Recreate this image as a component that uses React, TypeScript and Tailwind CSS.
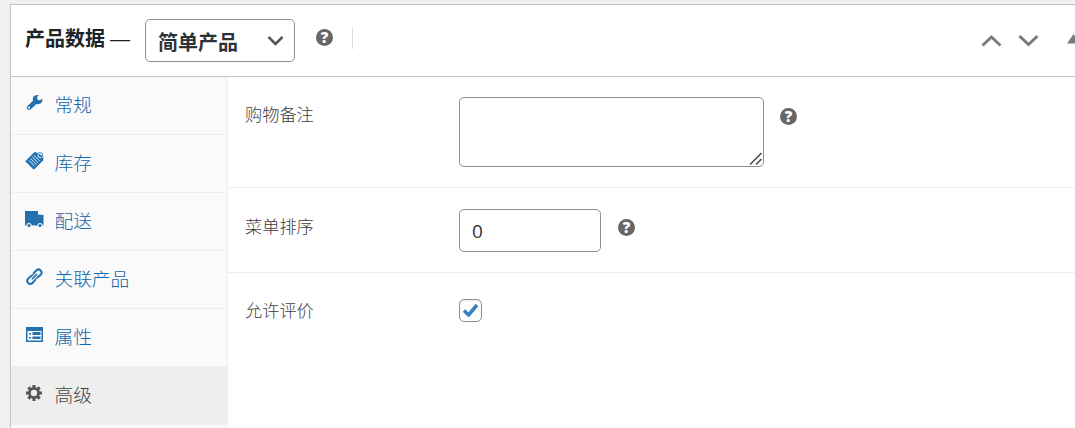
import type { ReactNode } from 'react'
import clsx from 'clsx'

type Tab = {
  label: string
  icon: ReactNode
  active?: boolean
}

const tabs: Tab[] = [
  { label: '常规', icon: <WrenchIcon /> },
  { label: '库存', icon: <NoteIcon /> },
  { label: '配送', icon: <TruckIcon /> },
  { label: '关联产品', icon: <LinkIcon /> },
  { label: '属性', icon: <ListIcon /> },
  { label: '高级', icon: <GearIcon />, active: true },
]

function WrenchIcon() {
  return (
    <svg width="20" height="20" viewBox="0 0 20 20" fill="none">
      <path
        d="M14.800 2.100 13 4.500l.6 2.300 2.300.6 2.300-1.900c.6 2.300-.3 4.500-2.300 5.300-1.100.5-2.400.5-3.500.1l-5.600 5.400c-1 .9-2.500.9-3.400 0-.9-.9-.9-2.400.1-3.400l5.500-5.200c-.4-1.200-.3-2.500.2-3.500.9-1.800 3-2.800 5.600-2.100Z"
        fill="currentColor"
      />
      <circle cx="5" cy="14.700" r="1.100" fill="#fafafa" />
    </svg>
  )
}

function NoteIcon() {
  return (
    <svg width="20" height="20" viewBox="0 0 20 20" fill="none">
      <path d="M10.800.8 1.200 10.300l8.600 8.500L19.300 9.300V5.200Z" fill="currentColor" />
      <path
        d="m10 4.300 5.700 5.700M8.300 6l5.700 5.700M6.600 7.700l5.700 5.700M4.900 9.400l5.700 5.700M3.200 11.100"
        stroke="#fafafa"
        strokeWidth=".9"
      />
      <path d="m13.300 1 5.700 1-.3 4.500M14 3.400l.5 2.800 2.900.5" stroke="#fafafa" strokeWidth=".9" />
      <path d="m14.300 1.400 4 .8.300 3.200" stroke="currentColor" strokeWidth=".8" />
    </svg>
  )
}

function TruckIcon() {
  return (
    <svg width="20" height="20" viewBox="0 0 20 20" fill="none">
      <path d="M1 2h13v3.500l5.500.5v10.500H1Z" fill="currentColor" />
      <circle cx="5" cy="16.500" r="2.600" fill="#fafafa" />
      <circle cx="16" cy="16.500" r="2.600" fill="#fafafa" />
      <circle cx="5" cy="16.500" r="1.600" fill="currentColor" />
      <circle cx="16" cy="16.500" r="1.600" fill="currentColor" />
    </svg>
  )
}

function LinkIcon() {
  return (
    <svg width="20" height="20" viewBox="0 0 20 20" fill="none" stroke="currentColor" strokeWidth="2">
      <rect x="-4.300" y="-3" width="8.600" height="6" rx="3" transform="translate(13.600 6.500) rotate(-45)" />
      <rect x="-4.300" y="-3" width="8.600" height="6" rx="3" transform="translate(7.200 12.900) rotate(-45)" />
      <path d="m8.200 11.900 4.400-4.400" stroke="#fafafa" strokeWidth="3.600" />
      <path d="m7.800 12.300 5.200-5.200" strokeWidth="1.600" />
    </svg>
  )
}

function ListIcon() {
  return (
    <svg width="20" height="20" viewBox="0 0 20 20" fill="none">
      <path d="M2 2h17v15H2Z" fill="currentColor" />
      <path d="M3.500 6h14v9.500h-14Z" fill="#fafafa" />
      <path d="M5 8h2v1.500H5ZM5 12h2v1.500H5ZM8.500 7h8v3h-8ZM8.500 11.500h8V14h-8Z" fill="currentColor" />
    </svg>
  )
}

function GearIcon() {
  return (
    <svg width="20" height="20" viewBox="0 0 20 20" fill="none" stroke="currentColor">
      <circle cx="10" cy="10" r="4.600" strokeWidth="2.800" />
      <path
        d="M10 2v3M10 15v3M2 10h3M15 10h3M4.340 4.340l2.120 2.120M13.540 13.540l2.120 2.120M4.340 15.660l2.120-2.120M13.540 6.460l2.120-2.120"
        strokeWidth="3"
      />
    </svg>
  )
}

function HelpTip({ className }: { className?: string }) {
  return (
    <span
      className={clsx(
        'flex size-[17px] shrink-0 items-center justify-center rounded-full bg-[#666] font-["Open_Sans",sans-serif] text-[15px] leading-[17px] font-extrabold text-white',
        className,
      )}
    >
      ?
    </span>
  )
}

function Field({ label, className, children }: { label: string; className: string; children: ReactNode }) {
  return (
    <div className={clsx('flex items-start pl-[17px]', className)}>
      <label className="w-[214px] shrink-0 text-[17.200px] leading-6 font-light text-[#3c3c3c]">{label}</label>
      {children}
    </div>
  )
}

export default function App() {
  return (
    <div className='h-[428px] overflow-hidden bg-[#f0f0f0] pt-1 pl-2.5 font-["Noto_Sans","Noto_Sans_CJK_SC",sans-serif]'>
      <div className="h-[424px] border-t border-l border-[#c3c4c7] bg-white">
        {/* Panel header */}
        <header className="flex h-[72px] items-start border-b border-[#c3c4c7] pl-3.5 text-[#1d2327]">
          <h2 className="mt-5 flex w-[120px] shrink-0 items-center text-[20px] leading-7 font-bold whitespace-nowrap">
            产品数据
            <span className="ml-[5px] font-['Liberation_Sans',sans-serif] font-normal">—</span>
          </h2>
          <div className="mt-3.5 flex h-[43px] w-[150px] shrink-0 items-center justify-between rounded-[5px] border border-[#8c8f94] pr-2.5 pl-3 text-[20px] leading-7 font-bold text-[#2c3338]">
            <span className="pt-1">简单产品</span>
            <svg width="17" height="11" viewBox="0 0 17 11" fill="none" stroke="#555" strokeWidth="2.500">
              <path d="m1.500 2 7 7 7-7" />
            </svg>
          </div>
          <HelpTip className="mt-[23.500px] ml-[21px]" />
          <div className="mt-[22px] ml-[19px] h-[22px] w-px bg-[#dcdcde]" />
          <div className="mt-[29px] ml-auto flex w-[94px] shrink-0 items-start overflow-hidden text-[#787c82]">
            <svg className="shrink-0" width="22" height="14" viewBox="0 0 22 14" fill="none" stroke="currentColor" strokeWidth="3">
              <path d="m1.500 11.500 9-8.500 9 8.500" />
            </svg>
            <svg className="ml-[15px] shrink-0" width="22" height="14" viewBox="0 0 22 14" fill="none" stroke="currentColor" strokeWidth="3">
              <path d="m1.500 2 9 8.500 9-8.500" />
            </svg>
            <svg className="ml-[27px] shrink-0" width="14" height="14" viewBox="0 0 14 14">
              <path d="M0 9.500 6.500 0l6.500 9.500Z" fill="currentColor" />
            </svg>
          </div>
        </header>

        <div className="flex h-[351px]">
          {/* Tabs */}
          <nav className="w-[217px] shrink-0 overflow-hidden border-r border-[#eee] bg-[#fafafa]">
            {tabs.map((tab) => (
              <a
                key={tab.label}
                className={clsx(
                  'flex h-[58px] items-start border-b border-[#eee] pl-[13px]',
                  tab.active ? 'bg-[#eee] text-[#555]' : 'text-[#2271b1]',
                )}
              >
                <span className="mt-4 w-[30.500px]">{tab.icon}</span>
                <span
                  className={clsx(
                    'mt-3.5 text-[18.700px] leading-7 font-light',
                    tab.active ? 'text-[#444]' : 'text-[#1266ab]',
                  )}
                >
                  {tab.label}
                </span>
              </a>
            ))}
          </nav>

          {/* Advanced options */}
          <section className="flex-1">
            <Field label="购物备注" className="h-[111px] border-b border-[#eee] pt-[26px]">
              <div className="relative -mt-1.5">
                <textarea className="block h-[70px] w-[305px] resize-none rounded-[5px] border border-[#8c8f94] outline-none" />
                <svg
                  className="absolute right-[2px] bottom-[2px]"
                  width="13"
                  height="13"
                  viewBox="0 0 13 13"
                  fill="none"
                  stroke="#555"
                  strokeWidth="1.600"
                >
                  <path d="M1 12.500 12.500 1M7 12.500l5.500-5.500" />
                </svg>
              </div>
              <HelpTip className="mt-[4.500px] ml-4" />
            </Field>
            <Field label="菜单排序" className="h-[85px] border-b border-[#eee] pt-[27px]">
              <input
                defaultValue="0"
                className="-mt-1.5 h-[43px] w-[142px] rounded-[5px] border border-[#8c8f94] px-3 font-['Open_Sans',sans-serif] text-[19px] text-[#2c3338] outline-none"
              />
              <HelpTip className="mt-1 ml-[17px]" />
            </Field>
            <Field label="允许评价" className="pt-[26px]">
              <span className="flex size-[23px] items-center justify-center rounded-[5px] border border-[#8c8f94] shadow-[inset_0_1px_2px_rgba(0,0,0,0.1)]">
                <svg width="17" height="17" viewBox="0 0 17 17" fill="none" stroke="#3582c4" strokeWidth="3.500">
                  <path d="m2 8.500 4.500 4.500 8.500-10" strokeLinejoin="round" />
                </svg>
              </span>
            </Field>
          </section>
        </div>
      </div>
    </div>
  )
}
